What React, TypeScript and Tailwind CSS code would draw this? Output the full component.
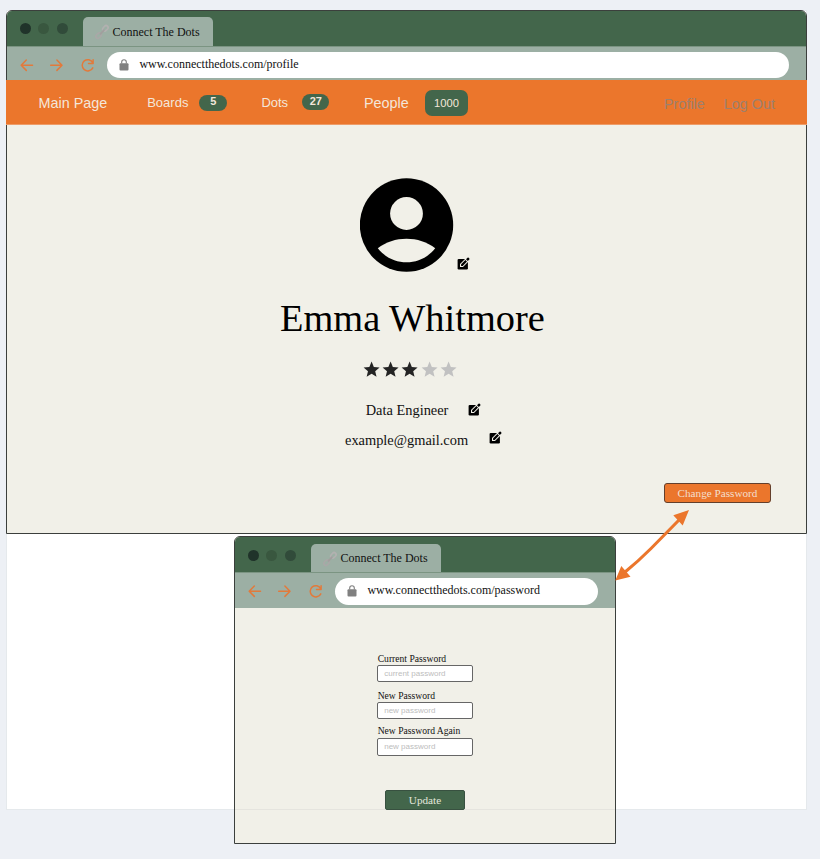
import React from "react";
import { MdStar } from "react-icons/md";

const serif = "font-['Liberation_Serif',serif]";
const sans = "font-['Liberation_Sans',sans-serif]";

function LinkIcon() {
  return (
    <svg className="ml-[12.5px] mt-[7.5px] h-[14px] w-[14px] shrink-0 overflow-visible" viewBox="0 0 14 14" fill="none" strokeLinecap="round">
      <g transform="rotate(-47 7 7)">
        <rect x="-1" y="5" width="6" height="4" rx="2" stroke="#a9a8a7" strokeWidth="1.7" />
        <rect x="9" y="5" width="6" height="4" rx="2" stroke="#b2b1b0" strokeWidth="1.7" />
        <path d="M4.600 7.200H9.400" stroke="#a19f9e" strokeWidth="1.9" />
      </g>
    </svg>
  );
}

function LockIcon() {
  return (
    <svg className="ml-[12px] mt-[7px] h-3 w-[10px] shrink-0" viewBox="0 0 10 12">
      <rect x="0.5" y="4.2" width="9" height="7.3" rx="1" fill="#808080" />
      <path d="M2.700 4.500V3A2.300 2.300 0 0 1 7.300 3V4.500" fill="none" stroke="#808080" strokeWidth="1.1" />
    </svg>
  );
}

function NavIcons() {
  return (
    <svg className="mt-[10px] h-4 w-[100px] shrink-0" viewBox="0 0 100 16" fill="none" stroke="#e27a3b" strokeWidth="1.5" strokeLinecap="round" strokeLinejoin="round">
      <path d="M25.5 8.2H14.5M19.3 3L14.2 8.2L19.3 13.4" />
      <path d="M43.700 8.200H54.700M49.900 3L55 8.200L49.900 13.400" />
      <path d="M85.8 5.8A5.6 5.6 0 1 0 85.8 10.8M86.100 2.800V6.500H81.500" />
    </svg>
  );
}

function BrowserChrome({ url, tall, pill }: { url: string; tall?: boolean; pill: string }) {
  return (
    <>
      <header className="flex h-[35px] shrink-0 rounded-t-[5px] bg-[#43664b]">
        <div className={"ml-[12.5px] flex gap-[7.800px] " + (tall ? "mt-[13px]" : "mt-[12px]")}>
          <i className="h-[11px] w-[11px] rounded-full bg-[#20332a]" />
          <i className="h-[11px] w-[11px] rounded-full bg-[#39573f]" />
          <i className="h-[11px] w-[11px] rounded-full bg-[#314b3a]" />
        </div>
        <div className={"ml-[14.900px] flex w-[130px] rounded-t-[5px] bg-[#9cafa4] " + (tall ? "mt-[7px]" : "mt-[6.4px]")}>
          <LinkIcon />
          <span className={serif + " ml-[3px] mt-[6.3px] whitespace-nowrap text-[12px] leading-[16px] text-[#111]"}>Connect The Dots</span>
        </div>
      </header>
      <div className={"flex shrink-0 border-t border-[#7b9482] bg-[#9cafa4] " + (tall ? "h-9" : "h-[34px]")}>
        <NavIcons />
        <div className={"mt-[5px] flex rounded-full bg-white " + (tall ? "h-[26.5px] " : "h-[26px] ") + pill}>
          <LockIcon />
          <span className={serif + " ml-[10.4px] mt-[4px] whitespace-nowrap text-[12px] leading-[16px] text-[#111]"}>{url}</span>
        </div>
      </div>
    </>
  );
}

function ProfileNav() {
  return (
    <nav className={sans + " -mx-px flex h-[45px] shrink-0 whitespace-nowrap border-b border-[#ee9c68] bg-[#eb762c] text-[#f4e6da]"}>
      <span className="ml-[32.5px] mt-[13px] w-[108.7px] text-[14.4px] leading-5">Main Page</span>
      <span className="mt-[13px] w-[52.2px] text-[13px] leading-5">Boards</span>
      <b className="mt-[15px] h-4 w-7 rounded-full bg-[#43664b] text-center text-[11px] leading-[13px]">5</b>
      <span className="ml-[34px] mt-[13px] w-[41px] text-[13px] leading-5">Dots</span>
      <b className="mt-[14px] h-4 w-[27px] rounded-full bg-[#43664b] text-center text-[11px] leading-[14px]">27</b>
      <span className="ml-[34.600px] mt-[13px] w-[61px] text-[14.4px] leading-5">People</span>
      <span className="mt-[10px] h-[26px] w-[43px] rounded-[7px] bg-[#43664b] text-center text-[11.2px] leading-[26px]">1000</span>
      <span className="ml-auto mt-[14px] text-[14.4px] leading-5 text-[#9c806e]">Profile</span>
      <span className="ml-[19px] mr-[32px] mt-[14px] text-[14.4px] leading-5 text-[#9c806e]">Log Out</span>
    </nav>
  );
}

function Avatar() {
  return (
    <svg className="h-[94px] w-[94px]" viewBox="0 0 94 94">
      <circle cx="46.500" cy="47" r="46.7" fill="#000" />
      <circle cx="46.500" cy="35.5" r="16.4" fill="#f1f0e8" />
      <path d="M17.800 70.300C33.500 57.500 59.500 57.500 75.200 70.300C60.500 89 32.500 89 17.800 70.300Z" fill="#f1f0e8" />
    </svg>
  );
}

function Edit({ className }: { className: string }) {
  return (
    <svg className={"h-[13px] w-[13px] shrink-0 " + className} viewBox="0 0 13 13">
      <rect x="0.6" y="1.9" width="10.3" height="10.500" rx="1.2" fill="#000" />
      <path d="M3 9.900V7L9 1L12 4L6 9.900Z" fill="#f1f0e8" />
      <path d="M4.100 8.900V7.300L8.400 3L10 4.600L5.700 8.900ZM9 2.300L10.500 0.800Q11.100 0.200 11.700 0.800L12.300 1.400Q12.900 2 12.300 2.600L10.800 4.100Z" fill="#000" />
    </svg>
  );
}

function Field({ label, placeholder, className, box }: { label: string; placeholder: string; className: string; box: string }) {
  return (
    <label className={"block " + className}>
      <span className={serif + " block h-[12px] whitespace-nowrap pl-[0.7px] text-[9.6px] leading-[12px] text-[#111]"}>{label}</span>
      <span className={sans + " flex w-24 items-center rounded-[2px] border border-[#666] bg-white pl-[6.2px] text-[8px] text-[#bdbdbd] " + box}>{placeholder}</span>
    </label>
  );
}

export default function App() {
  return (
    <main className="relative h-[859px] w-[820px] overflow-hidden bg-[#edf0f5]">
      <div className="absolute left-[6px] top-[10px] h-[800px] w-[801px] border border-[#e5e9ec] bg-white" />

      <section className="absolute left-[6px] top-[10px] flex h-[524px] w-[801px] flex-col rounded-t-[6px] border border-[#3b3f3c] bg-[#f1f0e8]">
        <BrowserChrome url="www.connectthedots.com/profile" pill="w-[682px]" />
        <ProfileNav />
        <div className="flex flex-col">
          <div className="ml-[352.5px] mt-[53px] flex">
            <Avatar />
            <Edit className="ml-[3.5px] mt-[79px]" />
          </div>
          <h1 className={serif + " ml-[273px] mt-[23px] whitespace-nowrap text-[38.4px] leading-[46px] text-black"}>Emma Whitmore</h1>
          <div className="ml-[355px] mt-[19px] flex">
            {[0, 1, 2, 3, 4].map((n) => (
              <MdStar key={n} className={"h-[19.2px] w-[19.2px] " + (n < 3 ? "text-[#242424]" : "text-[#c1c1c1]")} />
            ))}
          </div>
          <div className={serif + " ml-[358.7px] mt-[20.800px] flex h-[20px] whitespace-nowrap text-[14.4px] leading-5 text-[#111]"}>
            <span className="w-[102px]">Data Engineer</span>
            <Edit className="mt-[3px]" />
          </div>
          <div className={serif + " ml-[338px] mt-[10px] flex h-[20px] whitespace-nowrap text-[14.4px] leading-5 text-[#111]"}>
            <span className="w-[144px]">example@gmail.com</span>
            <Edit className="mt-px" />
          </div>
          <button className={serif + " mr-[35px] mt-[33px] h-[20px] w-[107px] self-end rounded-[3px] border border-[#633f2c] bg-[#eb762c] text-[11.2px] leading-[18px] text-[#f3dfce]"}>Change Password</button>
        </div>
      </section>

      <section className="absolute left-[234px] top-[536px] flex h-[308px] w-[382px] flex-col rounded-t-[6px] border border-[#3b3f3c] bg-[#f1f0e8]">
        <BrowserChrome url="www.connectthedots.com/password" pill="w-[263px]" tall />
        <form className="ml-[142px] flex flex-col items-start">
          <Field label="Current Password" placeholder="current password" className="mt-[45px]" box="h-[17px]" />
          <Field label="New Password" placeholder="new password" className="mt-[8px]" box="h-[17px]" />
          <Field label="New Password Again" placeholder="new password" className="mt-[6px]" box="mt-[1px] h-[18px]" />
          <button type="button" className={serif + " ml-[8px] mt-[34px] h-[20px] w-20 rounded-[2px] border border-[#385140] bg-[#43664b] text-[11.2px] leading-[18px] text-[#e4e8dc]"}>Update</button>
        </form>
      </section>

      <div className="absolute left-[235px] top-[809px] h-px w-[150px] bg-[#e5e4de]" />
      <div className="absolute left-[465px] top-[809px] h-px w-[150px] bg-[#e5e4de]" />

      <svg className="absolute left-[610px] top-[505px] h-20 w-[84px]" viewBox="610 505 84 80">
        <path d="M624.500 572.500Q638 561.500 651 548.500L680 519" fill="none" stroke="#eb762c" strokeWidth="3.1" />
        <path d="M689 510L673.300 515.300L682.700 525.500ZM615.300 580.500L621.300 566L630.500 576.700Z" fill="#eb762c" />
      </svg>
    </main>
  );
}
